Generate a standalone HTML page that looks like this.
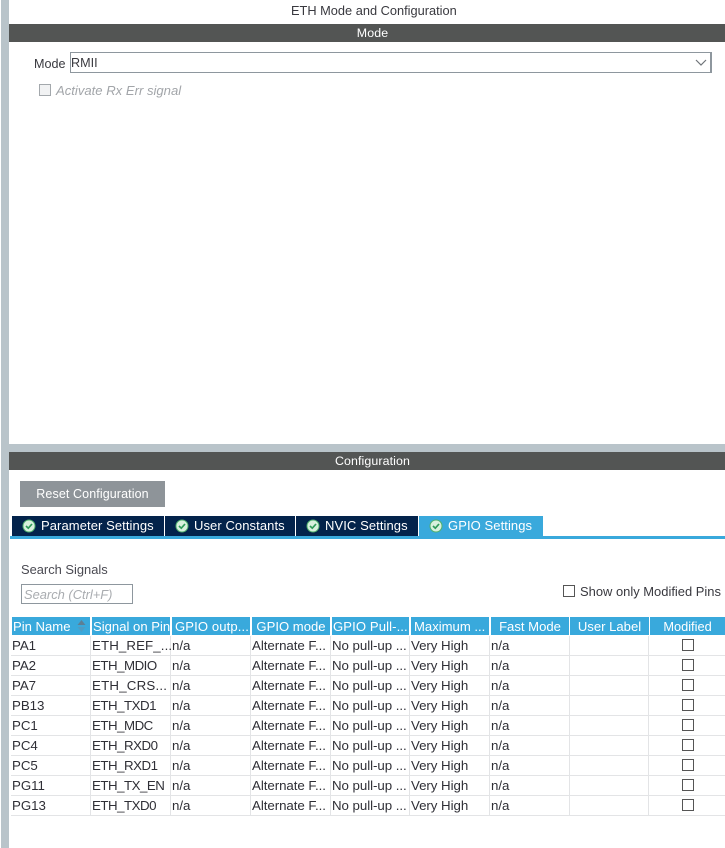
<!DOCTYPE html>
<html><head><meta charset="utf-8">
<style>
html,body{margin:0;padding:0;background:#fff;}
body{width:725px;height:848px;position:relative;overflow:hidden;font-family:"Liberation Sans",Arial,sans-serif;font-size:13.3px;color:#39393f;}
.a{position:absolute;white-space:nowrap;}
.bar{position:absolute;left:20px;width:705px;height:18px;color:#fff;text-align:center;line-height:19px;font-size:12.4px;letter-spacing:.1px;z-index:1;}
.bg{position:absolute;left:9px;width:716px;height:18px;background:#535554;}
.tab{position:absolute;top:516px;height:20px;background:#03234b;color:#fff;font-size:13px;line-height:20px;letter-spacing:.08px;}
.tab svg{position:absolute;left:10px;top:3px;}
.tab span{position:absolute;top:0;left:29px;white-space:nowrap;}
.h{position:absolute;top:617px;height:18px;background:#39a9dc;color:#fff;line-height:19px;font-size:13.1px;white-space:nowrap;overflow:hidden;}
.c{position:absolute;white-space:nowrap;line-height:22px;font-size:13.3px;color:#2f2f36;letter-spacing:-.05px;}
.e{letter-spacing:-.5px;}
.hl{position:absolute;left:11px;width:714px;height:1px;background:#e3e4e6;}
.vl{position:absolute;top:636px;height:180px;width:1px;background:#e3e4e6;}
.cb{position:absolute;left:682px;width:10px;height:10px;border:1px solid #555;}
</style></head><body>
<div class="a" style="left:1px;top:0;width:8px;height:848px;background:#b9c4ca"></div>
<div class="a" style="left:9px;top:444px;width:716px;height:8px;background:#b9c4ca"></div>

<div class="a" style="left:291px;top:2px;font-size:12.8px;line-height:18px;color:#39393f">ETH Mode and Configuration</div>
<div class="bg" style="top:24px"></div><div class="bar" style="top:24px">Mode</div>
<div class="a" style="left:34px;top:55px;line-height:18px;font-size:12.6px">Mode</div>
<div class="a" style="left:70px;top:52px;width:639px;height:19px;border:1px solid #8e979e;border-width:1px 2px 1px 1px;line-height:21px;color:#39393f;font-size:12.6px;text-indent:0">RMII</div>
<svg class="a" style="left:695px;top:59px" width="12" height="8"><path d="M1 1L6 6L11 1" fill="none" stroke="#6f7479" stroke-width="1.2"/></svg>
<div class="a" style="left:39px;top:84px;width:10px;height:10px;border:1px solid #a3a8ac;background:#f1f2f3"></div>
<div class="a" style="left:56px;top:82px;line-height:18px;font-style:italic;font-size:13.1px;color:#a2a5a9">Activate Rx Err signal</div>

<div class="bg" style="top:452px"></div><div class="bar" style="top:452px">Configuration</div>
<div class="a" style="left:20px;top:481px;width:145px;height:26px;background:#8e9499;color:#fff;text-align:center;line-height:27px;font-size:12.5px;letter-spacing:.1px">Reset Configuration</div>

<div class="tab" style="left:12px;width:152px"><svg width="14" height="14"><circle cx="7" cy="7" r="6" fill="#d8f0dc" stroke="#4fb06d"/><path d="M4 7L6.3 9.2L10 5" fill="none" stroke="#2e9a58" stroke-width="1.7"/></svg><span>Parameter Settings</span></div>
<div class="tab" style="left:165px;width:130px"><svg width="14" height="14"><circle cx="7" cy="7" r="6" fill="#d8f0dc" stroke="#4fb06d"/><path d="M4 7L6.3 9.2L10 5" fill="none" stroke="#2e9a58" stroke-width="1.7"/></svg><span>User Constants</span></div>
<div class="tab" style="left:296px;width:122px"><svg width="14" height="14"><circle cx="7" cy="7" r="6" fill="#d8f0dc" stroke="#4fb06d"/><path d="M4 7L6.3 9.2L10 5" fill="none" stroke="#2e9a58" stroke-width="1.7"/></svg><span>NVIC Settings</span></div>
<div class="tab" style="left:419px;width:124px;background:#39a9dc"><svg width="14" height="14"><circle cx="7" cy="7" r="6" fill="#d8f0dc" stroke="#4fb06d"/><path d="M4 7L6.3 9.2L10 5" fill="none" stroke="#2e9a58" stroke-width="1.7"/></svg><span>GPIO Settings</span></div>
<div class="a" style="left:10px;top:536px;width:715px;height:3px;background:#39a9dc"></div>

<div class="a" style="left:21px;top:561px;line-height:18px;font-size:12.9px;color:#4a4a52">Search Signals</div>
<div class="a" style="left:21px;top:584px;width:110px;height:18px;border:1px solid #8e979e;line-height:19px;font-style:italic;font-size:12.9px;color:#a9acb0;text-indent:2px">Search (Ctrl+F)</div>
<div class="a" style="left:563px;top:585px;width:10px;height:10px;border:1px solid #555"></div>
<div class="a" style="left:580px;top:583px;line-height:18px;font-size:12.95px;color:#39393f">Show only Modified Pins</div>

<div class="h" style="left:12px;width:78px;padding-left:1px;box-sizing:border-box">Pin Name</div>
<svg class="a" style="left:77px;top:619px" width="9" height="14"><path d="M4.5 1L8.5 6H.5Z" fill="#5d7f95"/><path d="M4.5 13L8.5 8H.5Z" fill="#4f9cc4"/></svg>
<div class="h" style="left:92px;width:78px;padding-left:1px;box-sizing:border-box">Signal on Pin</div>
<div class="h" style="left:172px;width:78px;padding-left:3px;box-sizing:border-box;letter-spacing:.1px">GPIO outp...</div>
<div class="h" style="left:252px;width:78px;text-align:center">GPIO mode</div>
<div class="h" style="left:332px;width:77px;padding-left:1px;box-sizing:border-box;letter-spacing:.1px">GPIO Pull-...</div>
<div class="h" style="left:411px;width:78px;padding-left:3px;box-sizing:border-box">Maximum ...</div>
<div class="h" style="left:491px;width:78px;text-align:center">Fast Mode</div>
<div class="h" style="left:570px;width:79px;text-align:center">User Label</div>
<div class="h" style="left:650px;width:75px;text-align:center;font-size:12.8px">Modified</div>

<div class="vl" style="left:90px"></div><div class="vl" style="left:170px"></div><div class="vl" style="left:250px"></div><div class="vl" style="left:330px"></div><div class="vl" style="left:409px"></div><div class="vl" style="left:489px"></div><div class="vl" style="left:569px"></div><div class="vl" style="left:648px"></div>

<div class="hl" style="top:655px"></div><div class="hl" style="top:675px"></div><div class="hl" style="top:695px"></div><div class="hl" style="top:715px"></div><div class="hl" style="top:735px"></div><div class="hl" style="top:755px"></div><div class="hl" style="top:775px"></div><div class="hl" style="top:795px"></div><div class="hl" style="top:815px"></div>

<div class="c" style="left:12px;top:635px">PA1</div><div class="c" style="left:92px;top:635px;letter-spacing:.1px">ETH_REF_...</div><div class="c" style="left:172px;top:635px">n/a</div><div class="c" style="left:252px;top:635px">Alternate F...</div><div class="c" style="left:332px;top:635px">No pull-up ...</div><div class="c" style="left:411px;top:635px">Very High</div><div class="c" style="left:491px;top:635px">n/a</div><div class="cb" style="top:639px"></div>
<div class="c" style="left:12px;top:655px">PA2</div><div class="c e" style="left:92px;top:655px">ETH_MDIO</div><div class="c" style="left:172px;top:655px">n/a</div><div class="c" style="left:252px;top:655px">Alternate F...</div><div class="c" style="left:332px;top:655px">No pull-up ...</div><div class="c" style="left:411px;top:655px">Very High</div><div class="c" style="left:491px;top:655px">n/a</div><div class="cb" style="top:659px"></div>
<div class="c" style="left:12px;top:675px">PA7</div><div class="c" style="left:92px;top:675px;letter-spacing:.2px">ETH_CRS...</div><div class="c" style="left:172px;top:675px">n/a</div><div class="c" style="left:252px;top:675px">Alternate F...</div><div class="c" style="left:332px;top:675px">No pull-up ...</div><div class="c" style="left:411px;top:675px">Very High</div><div class="c" style="left:491px;top:675px">n/a</div><div class="cb" style="top:679px"></div>
<div class="c" style="left:12px;top:695px">PB13</div><div class="c e" style="left:92px;top:695px">ETH_TXD1</div><div class="c" style="left:172px;top:695px">n/a</div><div class="c" style="left:252px;top:695px">Alternate F...</div><div class="c" style="left:332px;top:695px">No pull-up ...</div><div class="c" style="left:411px;top:695px">Very High</div><div class="c" style="left:491px;top:695px">n/a</div><div class="cb" style="top:699px"></div>
<div class="c" style="left:12px;top:715px">PC1</div><div class="c e" style="left:92px;top:715px">ETH_MDC</div><div class="c" style="left:172px;top:715px">n/a</div><div class="c" style="left:252px;top:715px">Alternate F...</div><div class="c" style="left:332px;top:715px">No pull-up ...</div><div class="c" style="left:411px;top:715px">Very High</div><div class="c" style="left:491px;top:715px">n/a</div><div class="cb" style="top:719px"></div>
<div class="c" style="left:12px;top:735px">PC4</div><div class="c e" style="left:92px;top:735px">ETH_RXD0</div><div class="c" style="left:172px;top:735px">n/a</div><div class="c" style="left:252px;top:735px">Alternate F...</div><div class="c" style="left:332px;top:735px">No pull-up ...</div><div class="c" style="left:411px;top:735px">Very High</div><div class="c" style="left:491px;top:735px">n/a</div><div class="cb" style="top:739px"></div>
<div class="c" style="left:12px;top:755px">PC5</div><div class="c e" style="left:92px;top:755px">ETH_RXD1</div><div class="c" style="left:172px;top:755px">n/a</div><div class="c" style="left:252px;top:755px">Alternate F...</div><div class="c" style="left:332px;top:755px">No pull-up ...</div><div class="c" style="left:411px;top:755px">Very High</div><div class="c" style="left:491px;top:755px">n/a</div><div class="cb" style="top:759px"></div>
<div class="c" style="left:12px;top:775px">PG11</div><div class="c e" style="left:92px;top:775px">ETH_TX_EN</div><div class="c" style="left:172px;top:775px">n/a</div><div class="c" style="left:252px;top:775px">Alternate F...</div><div class="c" style="left:332px;top:775px">No pull-up ...</div><div class="c" style="left:411px;top:775px">Very High</div><div class="c" style="left:491px;top:775px">n/a</div><div class="cb" style="top:779px"></div>
<div class="c" style="left:12px;top:795px">PG13</div><div class="c e" style="left:92px;top:795px">ETH_TXD0</div><div class="c" style="left:172px;top:795px">n/a</div><div class="c" style="left:252px;top:795px">Alternate F...</div><div class="c" style="left:332px;top:795px">No pull-up ...</div><div class="c" style="left:411px;top:795px">Very High</div><div class="c" style="left:491px;top:795px">n/a</div><div class="cb" style="top:799px"></div>
</body></html>
